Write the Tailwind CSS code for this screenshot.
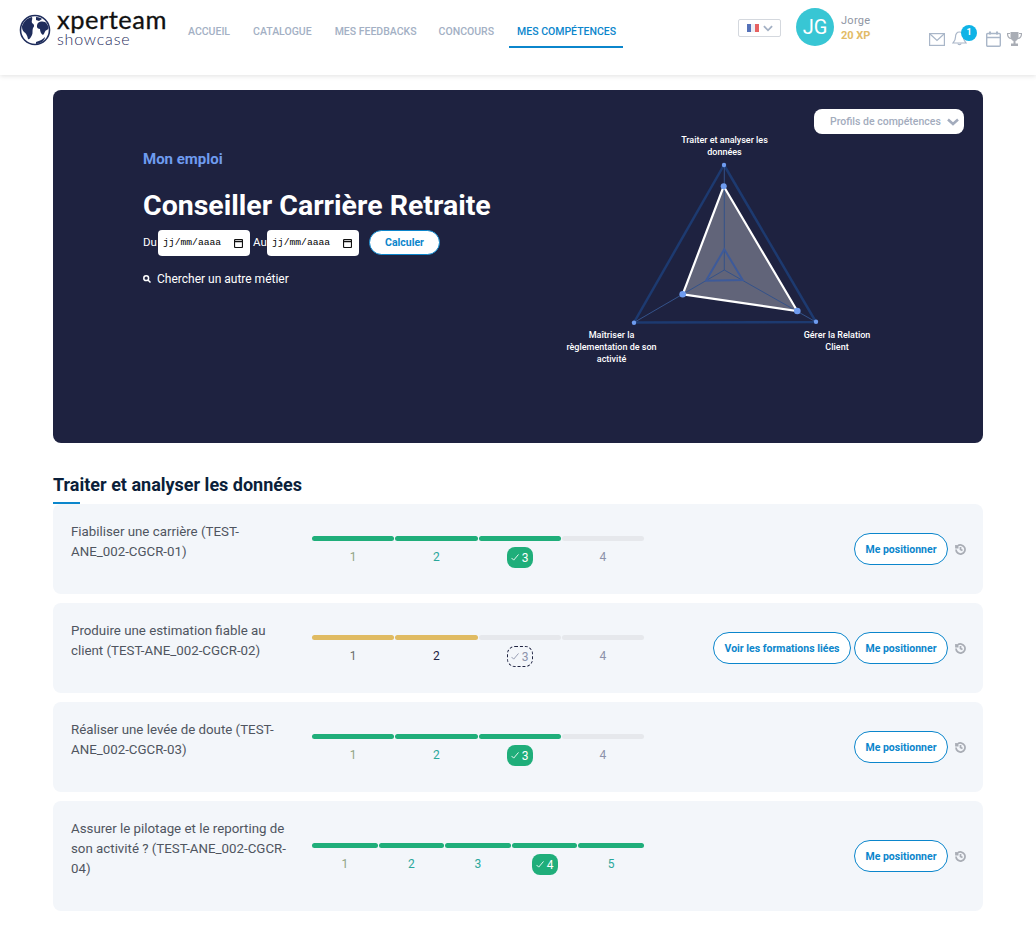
<!DOCTYPE html>
<html lang="fr">
<head>
    <meta charset="UTF-8">
    <meta name="viewport" content="width=device-width, initial-scale=1.0">
    <title>Mes compétences - Xperteam</title>
    <script src="https://cdn.jsdelivr.net/npm/@tailwindcss/browser@4"></script>
</head>
<body class="bg-white [font-family:Roboto,sans-serif] h-[933px] overflow-hidden">
    <!-- Barre du haut -->
    <header class="relative h-[75px] bg-white shadow-[0_1px_5px_rgba(0,0,0,0.12)] flex items-start">
        <div class="flex items-start w-[188px] shrink-0 pl-[19px] pt-[11px]">
            <svg class="w-[32px] h-[32px] mt-[3px] shrink-0" viewBox="0 0 32 32">
                <circle cx="16" cy="16" r="14.5" fill="#fff" stroke="#1f2d5c" stroke-width="1.6"/>
                <path d="M3 12 C5 7 8 4 13 3 C14 5 12 7 13 9 C15 10 16 12 14 14 C13 17 14 19 13 21 C11 25 10 26 9 25 C8 21 7 19 5 18 C3 16 3 14 3 12 Z" fill="#1f2d5c"/>
                <path d="M17 3 C20 3 22 4 23 5 L20 7 L17 6 Z" fill="#1f2d5c"/>
                <path d="M19 9 C22 7 26 7 28 10 C30 13 30 15 28 16 C26 16 26 19 24 21 C22 20 21 17 21 15 C18 15 17 12 19 9 Z" fill="#1f2d5c"/>
                <path d="M17 28 C21 27 24 25 26 23 C26 26 22 30 17 30 Z" fill="#1f2d5c"/>
            </svg>
            <div class="ml-[6px]">
                <div class="[font-family:Lato,sans-serif] [-webkit-text-stroke:0.3px_#111] text-[25.5px] leading-[17px] text-[#111] tracking-[0.5px]">xperteam</div>
                <div class="[font-family:Lato,sans-serif] font-light text-[16px] leading-[13px] mt-[4px] text-[#1f2d5c] tracking-[0.8px]">showcase</div>
            </div>
        </div>
        <nav class="flex items-start text-[10.5px] leading-[14px] font-medium text-[#a3b0c4] pt-[25px] w-[550px] shrink-0">
            <a class="mr-[23px]">ACCUEIL</a>
            <a class="mr-[23px]">CATALOGUE</a>
            <a class="mr-[22px]">MES FEEDBACKS</a>
            <a class="mr-[15px]">CONCOURS</a>
            <a class="pl-[8px] pr-[7px] pb-[7px] text-[#0b86cc] border-b-2 border-[#0b86cc]">MES COMPÉTENCES</a>
        </nav>
        <button class="mt-[19px] w-[43px] h-[18px] border border-[#d4d8de] rounded-[2px] flex items-center pl-[8px] gap-[4px]">
            <span class="flex w-[12px] h-[8px] opacity-80"><span class="flex-1 bg-[#2b4fa8]"></span><span class="flex-1 bg-[#e8ecf4]"></span><span class="flex-1 bg-[#e03a3a]"></span></span>
            <svg class="w-[10px] h-[7px]" viewBox="0 0 11 7" fill="none" stroke="#a3b0c4" stroke-width="2"><path d="M1 1l4.500 4.500L10 1"/></svg>
        </button>
        <div class="ml-[15px] mt-[8px] w-[38px] h-[38px] rounded-full bg-[#38c6d4] text-white text-[20px] flex items-center justify-center">JG</div>
        <div class="ml-[7px] mt-[14px] w-[88px] shrink-0">
            <div class="text-[11px] leading-[13px] text-[#8f96a3] tracking-[0.3px]">Jorge</div>
            <div class="text-[11px] leading-[13px] mt-[2px] font-bold text-[#e2bb66]">20 XP</div>
        </div>
        <div class="flex items-start mt-[31px]">
            <svg class="w-[16px] h-[13px] mt-[2px]" viewBox="0 0 16 13" fill="none" stroke="#a9b6c8" stroke-width="1.200"><rect x="0.600" y="0.600" width="14.800" height="11.800"/><path d="M1 1l7 6.500 7-6.500"/></svg>
            <div class="relative ml-[7px] w-[15px]">
                <svg class="w-[15px] h-[15px]" viewBox="0 0 15 15" fill="none" stroke="#a9b6c8" stroke-width="1.200"><path d="M7.500 1C4.500 1 3.500 3.500 3.500 6c0 3-1 4.500-2.500 6h13c-1.500-1.500-2.500-3-2.500-6 0-2.500-1-5-4-5z"/><path d="M6 12.500c0 1.500 3 1.500 3 0"/></svg>
                <span class="absolute -top-[6px] left-[9px] w-[16px] h-[16px] rounded-full bg-[#0fb3e6] text-white text-[9px] font-bold flex items-center justify-center">1</span>
            </div>
            <svg class="ml-[19px] w-[15px] h-[16px]" viewBox="0 0 15 16" fill="none" stroke="#a9b6c8" stroke-width="1.400"><rect x="0.700" y="2.500" width="13.600" height="12.800" rx="1"/><path d="M0.500 6.500h14" stroke-width="1.500"/><path d="M4 0.500v3M11 0.500v3" stroke-width="2"/></svg>
            <svg class="ml-[6px] w-[15px] h-[14px] mt-[1px]" viewBox="0 0 15 14" fill="#a9adb5"><path d="M3.500 0h8v5c0 2-1.500 3.500-3 4v2.500H11V14H4v-2.500h2.500V9c-1.500-.5-3-2-3-4z"/><path d="M3 1.500H0.500C0.500 4.500 1.500 6 4 6.500M12 1.500h2.500c0 3-1 4.500-3.500 5" fill="none" stroke="#a9adb5" stroke-width="1.200"/></svg>
        </div>
    </header>

    <main class="px-[53px] pt-[15px]">
        <!-- Bloc emploi + radar -->
        <section class="relative h-[353px] rounded-lg bg-[#1e2240] flex items-start">
            <div class="w-[507px] shrink-0 pl-[90px] pt-[60px]">
                <p class="text-[15px] leading-[18px] font-bold text-[#6f9cf0]">Mon emploi</p>
                <h1 class="text-[28.5px] leading-[36px] font-bold text-white mt-[20px] whitespace-nowrap">Conseiller Carrière Retraite</h1>
                <div class="flex items-start mt-[6px] text-[11.5px] text-white">
                    <span class="w-[15px] leading-[24px]">Du</span>
                    <label class="w-[92px] h-[26px] rounded-[4px] bg-white text-black text-[9.7px] pl-[5px] pr-[7px] flex items-center justify-between [font-family:'Liberation_Mono',monospace]">
                        <span>jj/mm/aaaa</span>
                        <svg class="w-[9px] h-[9px]" viewBox="0 0 9 9" fill="none" stroke="#111" stroke-width="1.200"><rect x="0.500" y="0.500" width="8" height="8" rx="1"/><path d="M0.500 2.500h8" stroke-width="1.500"/></svg>
                    </label>
                    <span class="ml-[3px] w-[14px] leading-[24px]">Au</span>
                    <label class="w-[92px] h-[26px] rounded-[4px] bg-white text-black text-[9.7px] pl-[5px] pr-[7px] flex items-center justify-between [font-family:'Liberation_Mono',monospace]">
                        <span>jj/mm/aaaa</span>
                        <svg class="w-[9px] h-[9px]" viewBox="0 0 9 9" fill="none" stroke="#111" stroke-width="1.200"><rect x="0.500" y="0.500" width="8" height="8" rx="1"/><path d="M0.500 2.500h8" stroke-width="1.500"/></svg>
                    </label>
                    <button class="ml-[10px] w-[71px] h-[25px] rounded-full bg-white border border-[#0b86cc] text-[#0b86cc] text-[10.5px] font-bold">Calculer</button>
                </div>
                <div class="flex items-center mt-[15px] text-[12px] leading-[16px] text-white">
                    <svg class="w-[8px] h-[8px]" viewBox="0 0 8 8" fill="none" stroke="#fff" stroke-width="1.500"><circle cx="3.200" cy="3.200" r="2.400"/><path d="M5 5l2.500 2.500"/></svg>
                    <span class="ml-[6px]">Chercher un autre métier</span>
                </div>
            </div>
            <svg class="w-[320px] h-[240px] mt-[40px] shrink-0" viewBox="560 130 320 240" font-size="9" font-weight="500" fill="#fff" text-anchor="middle">
                <polygon points="724,165 816,322 634,322.500" fill="none" stroke="#1d3a70" stroke-width="2.500"/>
                <polygon points="723.700,186.300 797.300,311 682.700,294.300" fill="#fff" fill-opacity="0.3"/>
                <path d="M724.300 270V165M724.300 270L816 322M724.300 270L634 322.500" stroke="#34528a" stroke-width="1"/>
                <polygon points="724.300,249.300 742.700,280 706,280.700" fill="none" stroke="#3d5a9a" stroke-width="2"/>
                <polygon points="723.700,186.300 797.300,311 682.700,294.300" fill="none" stroke="#fff" stroke-width="2.200"/>
                <g fill="#6f9cf0">
                    <circle cx="724" cy="165" r="2.200"/><circle cx="816" cy="321.700" r="2.200"/><circle cx="634" cy="322.700" r="2.200"/>
                    <circle cx="723.700" cy="186.300" r="3"/><circle cx="797.300" cy="311" r="3.300"/><circle cx="682.700" cy="294.300" r="3.300"/>
                </g>
                <text x="724.500" y="143">Traiter et analyser les</text>
                <text x="724.500" y="155">données</text>
                <text x="611.500" y="338">Maîtriser la</text>
                <text x="611.500" y="350">règlementation de son</text>
                <text x="611.500" y="362">activité</text>
                <text x="837" y="338">Gérer la Relation</text>
                <text x="837" y="350">Client</text>
            </svg>
            <button class="absolute top-[19px] right-[19px] w-[150px] h-[25px] rounded-lg bg-white flex items-center pl-[16px] text-[10.5px] font-medium text-[#a3acbd] whitespace-nowrap">
                <span>Profils de compétences</span>
                <svg class="ml-[6px] w-[12px] h-[8px] shrink-0" viewBox="0 0 12 8" fill="none" stroke="#a3acbd" stroke-width="2.500"><path d="M1 1.500l5 4.500 5-4.500"/></svg>
            </button>
        </section>

        <h2 class="mt-[30px] text-[18px] leading-[24px] font-bold text-[#0b1f3a]">Traiter et analyser les données</h2>
        <div class="mt-[5px] w-[27px] h-[2px] bg-[#0b86cc]"></div>

        <!-- Carte 1 -->
        <article class="flex items-center bg-[#f3f6fa] rounded-lg mb-[9px]">
            <p class="w-[259px] shrink-0 pl-[18px] pr-[20px] pt-[18px] pb-[32px] text-[13.3px] leading-[20px] text-[#4f5560]">Fiabiliser une carrière (TEST-ANE_002-CGCR-01)</p>
            <div class="w-[332px] shrink-0 h-[38px] pt-[6px] grid grid-cols-4 gap-x-[1px] text-[12px] text-center">
                <div><div class="h-[5px] rounded-full bg-[#1fae7a]"></div><div class="mt-[9px] leading-[14px] text-[#92a584]">1</div></div>
                <div><div class="h-[5px] rounded-full bg-[#1fae7a]"></div><div class="mt-[9px] leading-[14px] text-[#2aa79b]">2</div></div>
                <div><div class="h-[5px] rounded-full bg-[#1fae7a]"></div><div class="mt-[6px] mx-auto w-[26px] h-[21px] rounded-lg bg-[#1fae7a] text-white flex items-center justify-center gap-[3px]"><svg class="w-[8px] h-[7px]" viewBox="0 0 9 8" fill="none" stroke="#fff" stroke-width="1"><path d="M0.500 4.500l2.500 2.500 5.500-6.500"/></svg>3</div></div>
                <div><div class="h-[5px] rounded-full bg-[#e6e8ec]"></div><div class="mt-[9px] leading-[14px] text-[#8c92aa]">4</div></div>
            </div>
            <div class="ml-auto flex items-center gap-[3px] pr-[17px]">
                <button class="w-[94px] h-[32px] pt-[1px] rounded-full bg-white border border-[#0b86cc] text-[#0b86cc] text-[10.5px] font-bold">Me positionner</button>
                <svg class="ml-[4px] w-[11px] h-[11px]" viewBox="1 1 22 22" fill="none" stroke="#a9adb5" stroke-width="3.500"><path d="M3 12a9 9 0 1 0 3-6.700L3 8"/><path d="M3 3v5h5"/><path d="M12 7v5l4 2"/></svg>
            </div>
        </article>

        <!-- Carte 2 -->
        <article class="flex items-center bg-[#f3f6fa] rounded-lg mb-[9px]">
            <p class="w-[259px] shrink-0 pl-[18px] pr-[20px] pt-[18px] pb-[32px] text-[13.3px] leading-[20px] text-[#4f5560]">Produire une estimation fiable au client (TEST-ANE_002-CGCR-02)</p>
            <div class="w-[332px] shrink-0 h-[38px] pt-[6px] grid grid-cols-4 gap-x-[1px] text-[12px] text-center">
                <div><div class="h-[5px] rounded-full bg-[#e0bb62]"></div><div class="mt-[9px] leading-[14px] text-[#6b6f6a]">1</div></div>
                <div><div class="h-[5px] rounded-full bg-[#e0bb62]"></div><div class="mt-[9px] leading-[14px] text-[#1e2240]">2</div></div>
                <div><div class="h-[5px] rounded-full bg-[#e6e8ec]"></div><div class="mt-[6px] mx-auto w-[26px] h-[21px] rounded-lg border border-dashed border-[#1e2240] text-[#8c92aa] flex items-center justify-center gap-[3px]"><svg class="w-[8px] h-[7px]" viewBox="0 0 9 8" fill="none" stroke="#8c92aa" stroke-width="1"><path d="M0.500 4.500l2.500 2.500 5.500-6.500"/></svg>3</div></div>
                <div><div class="h-[5px] rounded-full bg-[#e6e8ec]"></div><div class="mt-[9px] leading-[14px] text-[#8c92aa]">4</div></div>
            </div>
            <div class="ml-auto flex items-center gap-[3px] pr-[17px]">
                <button class="w-[138px] h-[32px] pt-[1px] rounded-full bg-white border border-[#0b86cc] text-[#0b86cc] text-[10.5px] font-bold">Voir les formations liées</button>
                <button class="w-[94px] h-[32px] pt-[1px] rounded-full bg-white border border-[#0b86cc] text-[#0b86cc] text-[10.5px] font-bold">Me positionner</button>
                <svg class="ml-[4px] w-[11px] h-[11px]" viewBox="1 1 22 22" fill="none" stroke="#a9adb5" stroke-width="3.500"><path d="M3 12a9 9 0 1 0 3-6.700L3 8"/><path d="M3 3v5h5"/><path d="M12 7v5l4 2"/></svg>
            </div>
        </article>

        <!-- Carte 3 -->
        <article class="flex items-center bg-[#f3f6fa] rounded-lg mb-[9px]">
            <p class="w-[259px] shrink-0 pl-[18px] pr-[20px] pt-[18px] pb-[32px] text-[13.3px] leading-[20px] text-[#4f5560]">Réaliser une levée de doute (TEST-ANE_002-CGCR-03)</p>
            <div class="w-[332px] shrink-0 h-[38px] pt-[6px] grid grid-cols-4 gap-x-[1px] text-[12px] text-center">
                <div><div class="h-[5px] rounded-full bg-[#1fae7a]"></div><div class="mt-[9px] leading-[14px] text-[#92a584]">1</div></div>
                <div><div class="h-[5px] rounded-full bg-[#1fae7a]"></div><div class="mt-[9px] leading-[14px] text-[#2aa79b]">2</div></div>
                <div><div class="h-[5px] rounded-full bg-[#1fae7a]"></div><div class="mt-[6px] mx-auto w-[26px] h-[21px] rounded-lg bg-[#1fae7a] text-white flex items-center justify-center gap-[3px]"><svg class="w-[8px] h-[7px]" viewBox="0 0 9 8" fill="none" stroke="#fff" stroke-width="1"><path d="M0.500 4.500l2.500 2.500 5.500-6.500"/></svg>3</div></div>
                <div><div class="h-[5px] rounded-full bg-[#e6e8ec]"></div><div class="mt-[9px] leading-[14px] text-[#8c92aa]">4</div></div>
            </div>
            <div class="ml-auto flex items-center gap-[3px] pr-[17px]">
                <button class="w-[94px] h-[32px] pt-[1px] rounded-full bg-white border border-[#0b86cc] text-[#0b86cc] text-[10.5px] font-bold">Me positionner</button>
                <svg class="ml-[4px] w-[11px] h-[11px]" viewBox="1 1 22 22" fill="none" stroke="#a9adb5" stroke-width="3.500"><path d="M3 12a9 9 0 1 0 3-6.700L3 8"/><path d="M3 3v5h5"/><path d="M12 7v5l4 2"/></svg>
            </div>
        </article>

        <!-- Carte 4 -->
        <article class="flex items-center bg-[#f3f6fa] rounded-lg">
            <p class="w-[259px] shrink-0 pl-[18px] pr-[20px] pt-[18px] pb-[32px] text-[13.3px] leading-[20px] text-[#4f5560]">Assurer le pilotage et le reporting de son activité ? (TEST-ANE_002-CGCR-04)</p>
            <div class="w-[332px] shrink-0 h-[38px] pt-[6px] grid grid-cols-5 gap-x-[1px] text-[12px] text-center">
                <div><div class="h-[5px] rounded-full bg-[#1fae7a]"></div><div class="mt-[9px] leading-[14px] text-[#92a584]">1</div></div>
                <div><div class="h-[5px] rounded-full bg-[#1fae7a]"></div><div class="mt-[9px] leading-[14px] text-[#2aa79b]">2</div></div>
                <div><div class="h-[5px] rounded-full bg-[#1fae7a]"></div><div class="mt-[9px] leading-[14px] text-[#2aa79b]">3</div></div>
                <div><div class="h-[5px] rounded-full bg-[#1fae7a]"></div><div class="mt-[6px] mx-auto w-[26px] h-[21px] rounded-lg bg-[#1fae7a] text-white flex items-center justify-center gap-[3px]"><svg class="w-[8px] h-[7px]" viewBox="0 0 9 8" fill="none" stroke="#fff" stroke-width="1"><path d="M0.500 4.500l2.500 2.500 5.500-6.500"/></svg>4</div></div>
                <div><div class="h-[5px] rounded-full bg-[#1fae7a]"></div><div class="mt-[9px] leading-[14px] text-[#2aa79b]">5</div></div>
            </div>
            <div class="ml-auto flex items-center gap-[3px] pr-[17px]">
                <button class="w-[94px] h-[32px] pt-[1px] rounded-full bg-white border border-[#0b86cc] text-[#0b86cc] text-[10.5px] font-bold">Me positionner</button>
                <svg class="ml-[4px] w-[11px] h-[11px]" viewBox="1 1 22 22" fill="none" stroke="#a9adb5" stroke-width="3.500"><path d="M3 12a9 9 0 1 0 3-6.700L3 8"/><path d="M3 3v5h5"/><path d="M12 7v5l4 2"/></svg>
            </div>
        </article>
    </main>
</body>
</html>
